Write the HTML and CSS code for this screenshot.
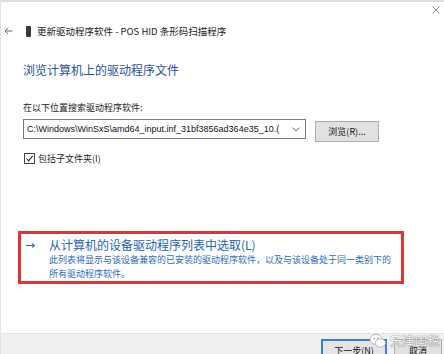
FILE: index.html
```html
<!DOCTYPE html>
<html lang="zh-CN">
<head>
<meta charset="utf-8">
<title>更新驱动程序软件</title>
<link rel="stylesheet" href="styles.css">
</head>
<body>
<div class="window">
  <div class="titlebar">
    <svg class="close" width="8" height="8" viewBox="0 0 8 8"><path d="M0.5 0.5L7.5 7.5M7.5 0.5L0.5 7.5" stroke="#8a8a8a" stroke-width="1" fill="none"/></svg>
  </div>
  <div class="header">
    <svg class="back" width="9" height="8" viewBox="0 0 9 8"><path d="M8.5 4H1M4.2 0.8L1 4L4.2 7.2" stroke="#6a6a6a" stroke-width="1" fill="none"/></svg>
    <span class="device"></span>
    <span class="title">更新驱动程序软件 - POS HID 条形码扫描程序</span>
  </div>
  <div class="content">
    <div class="heading">浏览计算机上的驱动程序文件</div>
    <div class="label">在以下位置搜索驱动程序软件:</div>
    <div class="pathrow">
      <div class="combo">
        <span class="combo-text">C:\Windows\WinSxS\amd64_input.inf_31bf3856ad364e35_10.(</span>
        <svg class="chev" width="8" height="5" viewBox="0 0 8 5"><path d="M0.5 0.5L4 4L7.5 0.5" stroke="#666" stroke-width="1" fill="none"/></svg>
      </div>
      <div class="btn browse">浏览(R)...</div>
    </div>
    <div class="checkrow">
      <span class="checkbox"><svg width="9" height="9" viewBox="0 0 9 9"><path d="M1.5 4.5L3.6 6.8L7.6 1.8" stroke="#333" stroke-width="1.1" fill="none"/></svg></span>
      <span class="checklabel">包括子文件夹(I)</span>
    </div>
    <div class="pick">
      <div class="pick-title"><span class="arrow">→</span><span>从计算机的设备驱动程序列表中选取(L)</span></div>
      <div class="pick-desc">此列表将显示与该设备兼容的已安装的驱动程序软件，以及与该设备处于同一类别下的<br>所有驱动程序软件。</div>
    </div>
  </div>
  <div class="footer">
    <div class="btn next">下一步(N)</div>
    <div class="btn cancel">取消</div>
  </div>
  <div class="watermark">
    <svg width="18" height="16" viewBox="0 0 18 16"><ellipse cx="7" cy="6.5" rx="6" ry="5" fill="#fff" stroke="#aaa" stroke-width="0.8"/><ellipse cx="11.5" cy="10" rx="5" ry="4.2" fill="#fff" stroke="#aaa" stroke-width="0.8"/><circle cx="5" cy="5.5" r="0.8" fill="#999"/><circle cx="9" cy="5.5" r="0.8" fill="#999"/></svg>
    <span class="wm-text">天津国税</span>
  </div>
</div>
</body>
</html>
```
FILE: styles.css
```css
* { box-sizing: border-box; }
html, body { margin: 0; padding: 0; }
body {
  width: 444px;
  height: 354px;
  overflow: hidden;
  background: #fff;
  font-family: "Noto Sans CJK SC", "Liberation Sans", sans-serif;
  color: #1a1a1a;
}
.window {
  position: relative;
  width: 444px;
  height: 354px;
  display: flex;
  flex-direction: column;
  border-top: 2px solid #d6e3e0;
  border-left: 1px solid #e4e4e4;
}
.titlebar {
  height: 18px;
  display: flex;
  justify-content: flex-end;
  align-items: center;
  padding-right: 4px;
}
.close { margin-top: -2px; }
.header {
  height: 18px;
  margin-top: 2px;
  display: flex;
  align-items: center;
  padding-left: 3px;
}
.back { margin-right: 13px; }
.device {
  width: 5px;
  height: 11px;
  background: #3a3a3a;
  border-radius: 1px;
  margin-right: 6px;
}
.title {
  font-size: 9.5px;
  line-height: 18px;
  color: #222;
}
.content {
  padding-left: 22px;
  display: flex;
  flex-direction: column;
}
.heading {
  margin-top: 21px;
  font-size: 12px;
  line-height: 18px;
  color: #1f4f9e;
}
.label {
  margin-top: 22px;
  font-size: 9px;
  line-height: 14px;
}
.pathrow {
  margin-top: 4px;
  display: flex;
  align-items: flex-start;
}
.combo {
  width: 283px;
  height: 20px;
  border: 1px solid #7a7a7a;
  display: flex;
  align-items: center;
  padding-left: 3px;
  padding-right: 5px;
  background: #fff;
}
.combo-text {
  flex: 1;
  font-family: "Liberation Sans", "Noto Sans CJK SC", sans-serif;
  font-size: 9px;
  white-space: nowrap;
  overflow: hidden;
  color: #111;
}
.chev { margin-left: 4px; }
.btn {
  display: flex;
  align-items: center;
  justify-content: center;
  font-size: 9px;
  background: #e1e1e1;
  border: 1px solid #adadad;
  color: #111;
}
.browse {
  margin-left: 9px;
  margin-top: 2px;
  width: 64px;
  height: 21px;
}
.checkrow {
  margin-top: 9px;
  height: 14px;
  display: flex;
  align-items: center;
  padding-left: 1px;
}
.checkbox {
  width: 11px;
  height: 11px;
  border: 1px solid #444;
  display: flex;
  align-items: center;
  justify-content: center;
  background: #fff;
  margin-right: 3px;
}
.checklabel { font-size: 9px; }
.pick {
  margin-top: 66px;
  margin-left: -5px;
  width: 386px;
  height: 53px;
  border: 3px solid #e03434;
  padding: 2px 0 0 3px;
}
.pick-title {
  display: flex;
  align-items: center;
  height: 17px;
  color: #1c62b9;
  font-size: 12px;
}
.arrow {
  font-family: "DejaVu Sans", sans-serif;
  font-size: 12px;
  width: 25px;
  padding-left: 1px;
}
.pick-desc {
  padding-left: 25px;
  font-size: 9px;
  line-height: 14px;
  color: #2a6bbf;
}
.footer {
  margin-top: auto;
  height: 21px;
  background: #f0f0f0;
  border-top: 1px solid #e2e2e2;
  display: flex;
  align-items: flex-start;
  justify-content: flex-end;
  padding-top: 5px;
  padding-right: 2px;
}
.next {
  width: 66px;
  height: 22px;
  border: 2px solid #3c7fd0;
  background: #e5e5e5;
}
.cancel {
  width: 48px;
  height: 22px;
  margin-left: 7px;
}
.watermark {
  position: absolute;
  left: 368px;
  top: 330px;
  display: flex;
  align-items: center;
  gap: 3px;
}
.wm-text {
  font-size: 12px;
  color: #f4f4f4;
  text-shadow: 0 0 1px #777, 0 0 1px #777;
  letter-spacing: 0.5px;
}
```
